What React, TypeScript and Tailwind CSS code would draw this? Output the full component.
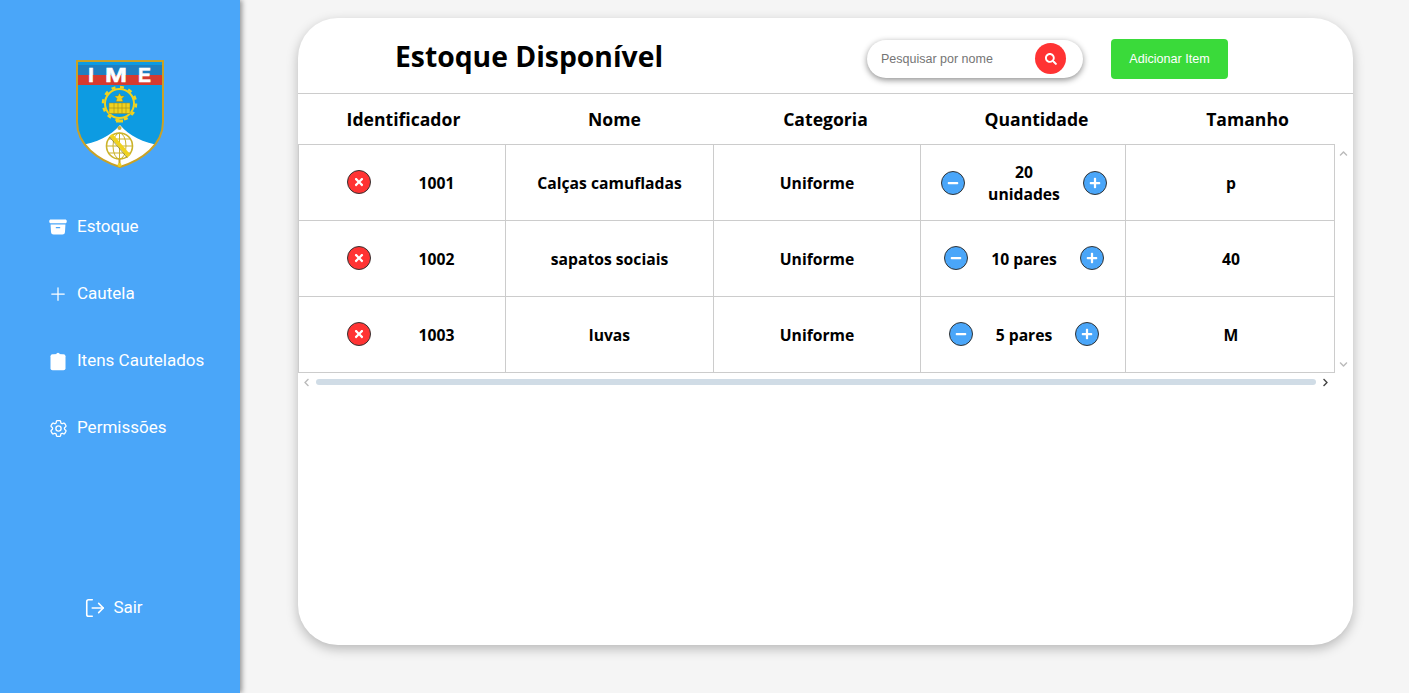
import { FaChevronDown, FaChevronLeft, FaChevronRight, FaChevronUp, FaMinus, FaPlus, FaSearch, FaTimes } from "react-icons/fa";
import { HiArchiveBox, HiOutlineCog6Tooth, HiOutlinePlus } from "react-icons/hi2";
import { LogOut } from "lucide-react";

function ClipboardIcon() {
  return (
    <svg width="20" height="20" viewBox="0 0 20 20" fill="#ffffff">
      <rect x="2.5" y="3.2" width="15" height="16" rx="2" />
      <path d="M6.5 3.5H8.2A1.8 1.8 0 0 1 11.8 3.5H13.5V5.5H6.5Z" />
    </svg>
  );
}

const navItems = [
  { label: "Estoque", icon: <HiArchiveBox className="h-5 w-5 shrink-0" /> },
  { label: "Cautela", icon: <HiOutlinePlus className="h-5 w-5 shrink-0" /> },
  { label: "Itens Cautelados", icon: <ClipboardIcon /> },
  { label: "Permissões", icon: <HiOutlineCog6Tooth className="-mr-px h-[21px] w-[21px] shrink-0" /> },
];

const columns = ["Identificador", "Nome", "Categoria", "Quantidade", "Tamanho"];

const items = [
  { id: "1001", nome: "Calças camufladas", categoria: "Uniforme", quantidade: "20 unidades", tamanho: "p", wrap: true },
  { id: "1002", nome: "sapatos sociais", categoria: "Uniforme", quantidade: "10 pares", tamanho: "40", wrap: false },
  { id: "1003", nome: "luvas", categoria: "Uniforme", quantidade: "5 pares", tamanho: "M", wrap: false },
];

function Logo() {
  const gold = "#f0d21e";
  const shield = "M1 1H87V62C87 85 66 100 44 107C22 100 1 85 1 62Z";
  return (
    <svg width="88" height="108" viewBox="0 0 88 108" className="shrink-0">
      <defs>
        <clipPath id="shield-clip">
          <path d={shield} />
        </clipPath>
      </defs>
      <path d={shield} fill="#0d9be2" />
      <g clipPath="url(#shield-clip)">
        <rect x="0" y="5" width="88" height="10" fill="#1f7fc0" />
        <rect x="0" y="15" width="88" height="10" fill="#d63a2f" />
        <path d="M0 86C22 83 34 76 44 65C54 76 66 83 88 86V108H0Z" fill="#ffffff" />
      </g>
      <path d={shield} fill="none" stroke="#c9a227" strokeWidth="2" />
      <g fontFamily="Liberation Sans, sans-serif" fontWeight="700" fontSize="21" fill="#ffffff" stroke="#ffffff" strokeWidth="0.5">
        <text x="12" y="22" textLength="6" lengthAdjust="spacingAndGlyphs">I</text>
        <text x="29" y="22" textLength="22" lengthAdjust="spacingAndGlyphs">M</text>
        <text x="62" y="22" textLength="13" lengthAdjust="spacingAndGlyphs">E</text>
      </g>
      <circle cx="43.5" cy="43.5" r="16.5" fill="none" stroke={gold} strokeWidth="2.5" strokeDasharray="4 4.64" />
      <circle cx="43.5" cy="43.5" r="14.5" fill="#0d9be2" stroke={gold} strokeWidth="2" />
      <path d="M43.5 33L45 36H48.5L46 38.5L47 41.5H40L41 38.5L38.5 36H42Z" fill={gold} stroke="#8a7a20" strokeWidth="0.4" />
      <rect x="33" y="43" width="21" height="10.5" fill={gold} stroke="#9a8a20" strokeWidth="0.5" />
      <path d="M38 43V53.5M42 43V53.5M46 43V53.5M50 43V53.5M33 48H54" stroke="#9a8a20" strokeWidth="0.6" />
      <rect x="40" y="59.5" width="7" height="3" fill={gold} />
      <circle cx="43.5" cy="68" r="2" fill="#c9b03a" />
      <circle cx="43.5" cy="86" r="13" fill="#ffffff" stroke="#cbb32a" strokeWidth="1.6" />
      <path d="M30.5 86H56.5M32.5 79H54.5M32.5 93H54.5M43.5 73V99" stroke="#cbb32a" strokeWidth="1" />
      <ellipse cx="43.5" cy="86" rx="6.5" ry="13" fill="none" stroke="#cbb32a" strokeWidth="1" />
      <path d="M35 75L53 96" stroke={gold} strokeWidth="4" />
      <path d="M33.5 77L51.5 98" stroke="#7d7426" strokeWidth="0.7" />
      <rect x="42.5" y="99" width="2" height="6" fill="#c9a227" />
      <circle cx="43.5" cy="105" r="2" fill={gold} />
    </svg>
  );
}

function RoundButton({ color, children }: { color: string; children: React.ReactNode }) {
  return (
    <button className={`flex h-6 w-6 shrink-0 items-center justify-center rounded-full border border-[#333333] text-white ${color}`}>
      {children}
    </button>
  );
}

export default function App() {
  return (
    <div className="flex h-[693px] w-[1409px] overflow-hidden bg-[#f5f5f5]">
      <aside className="z-10 flex h-full w-[240px] shrink-0 flex-col bg-[#4aa6f9] pb-[73px] pt-[60px] text-white shadow-[2px_0_5px_rgba(0,0,0,0.4)] font-['Roboto',sans-serif]">
        <div className="ml-[76px]">
          <Logo />
        </div>
        <nav className="mt-[47px] flex flex-col gap-[43px] pl-[48px]">
          {navItems.map((item) => (
            <a key={item.label} className="flex h-6 items-center gap-[9px] text-[17px]">
              {item.icon}
              <span>{item.label}</span>
            </a>
          ))}
        </nav>
        <a className="mt-auto flex h-6 items-center justify-center gap-[7px] pr-[13px] text-[17px]">
          <LogOut className="h-[22px] w-[22px]" strokeWidth={1.75} />
          <span>Sair</span>
        </a>
      </aside>

      <main className="flex-1 pl-[58px] pt-[18px]">
        <div className="h-[627px] w-[1055px] overflow-hidden rounded-[40px] bg-white shadow-[0_4px_12px_rgba(0,0,0,0.25)] font-['Open_Sans',sans-serif]">
          <header className="flex h-[76px] items-center border-b border-[#cccccc] pl-[97px]">
            <h1 className="mt-[2px] w-[472px] text-[28.3px] font-bold text-black">Estoque Disponível</h1>
            <div className="mt-[6px] flex h-[38px] w-[216px] items-center justify-between rounded-[19px] bg-white pl-[14px] pr-[17px] shadow-[0_2px_6px_rgba(0,0,0,0.45)]">
              <input
                placeholder="Pesquisar por nome"
                className="mt-[2px] w-[130px] bg-transparent text-[12.5px] outline-none placeholder:text-[#757575] font-['Liberation_Sans',sans-serif]"
              />
              <button className="flex h-[31px] w-[31px] items-center justify-center rounded-full bg-[#ff3333] text-white">
                <FaSearch className="h-3 w-3" />
              </button>
            </div>
            <button className="ml-[28px] mt-[6px] h-10 w-[117px] rounded bg-[#3ada3a] pt-[1px] text-[12.6px] text-white font-['Liberation_Sans',sans-serif]">
              Adicionar Item
            </button>
          </header>

          <div className="grid h-[50px] grid-cols-5 items-center text-center text-[17.6px] font-bold text-black">
            {columns.map((col) => (
              <div key={col}>{col}</div>
            ))}
          </div>

          <div className="flex">
            <table className="w-[1036px] table-fixed border-collapse text-center text-[15.7px] font-bold text-black">
              <tbody>
                {items.map((item) => (
                  <tr key={item.id} className="h-[76px]">
                    <td className="w-[207px] border border-[#cccccc]">
                      <div className="flex items-center justify-center gap-[47px] pr-[2px]">
                        <RoundButton color="bg-[#ff3333]">
                          <FaTimes className="h-3 w-3" />
                        </RoundButton>
                        <span className="mt-[2px] w-[37px]">{item.id}</span>
                      </div>
                    </td>
                    <td className="w-[208px] border border-[#cccccc] pt-[2px]">{item.nome}</td>
                    <td className="w-[207px] border border-[#cccccc] pt-[2px]">{item.categoria}</td>
                    <td className="w-[205px] border border-[#cccccc]">
                      <div className="flex items-center justify-center gap-[23px] pl-[2px]">
                        <RoundButton color="bg-[#4aa6f9]">
                          <FaMinus className="h-3 w-3" />
                        </RoundButton>
                        <span className={item.wrap ? "w-min leading-[22px]" : "mt-[2px] whitespace-nowrap"}>{item.quantidade}</span>
                        <RoundButton color="bg-[#4aa6f9]">
                          <FaPlus className="h-3 w-3" />
                        </RoundButton>
                      </div>
                    </td>
                    <td className="w-[209px] border border-[#cccccc] pl-[2px] pt-[2px]">{item.tamanho}</td>
                  </tr>
                ))}
              </tbody>
            </table>
            <div className="flex w-[17px] flex-col items-center justify-between pb-[4px] pt-[5px] text-[#bbbbbb]">
              <FaChevronUp className="h-[9px] w-[9px]" />
              <FaChevronDown className="h-[9px] w-[9px]" />
            </div>
          </div>

          <div className="mt-[3px] flex h-[12px] w-[1037px] items-center">
            <FaChevronLeft className="ml-[4px] h-[9px] w-[9px] shrink-0 text-[#bbbbbb]" />
            <div className="ml-[5px] h-[6px] w-[1000px] rounded-full bg-[#d0dce6]" />
            <FaChevronRight className="ml-[5px] h-[9px] w-[9px] shrink-0 text-[#444444]" />
          </div>
        </div>
      </main>
    </div>
  );
}
